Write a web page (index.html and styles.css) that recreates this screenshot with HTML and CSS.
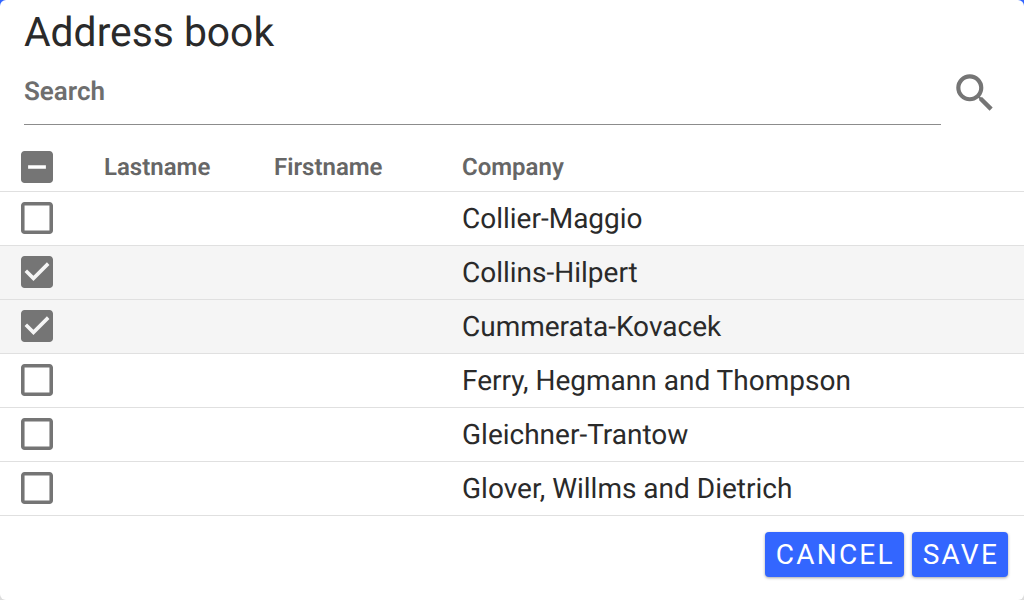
FILE: index.html
```html
<!DOCTYPE html>
<html lang="en">
<head>
<meta charset="utf-8">
<title>Address book</title>
<link rel="stylesheet" href="styles.css">
</head>
<body>
<div class="dialog">
  <h1 class="title">Address book</h1>
  <div class="search-row">
    <div class="search-field"><span class="search-label">Search</span></div>
    <svg class="search-icon" viewBox="0 0 24 24"><path d="M15.5 14h-.79l-.28-.27A6.47 6.47 0 0 0 16 9.5 6.5 6.5 0 1 0 9.5 16c1.61 0 3.09-.59 4.23-1.57l.27.28v.79l5 4.99L20.49 19l-4.99-5zm-6 0C7.01 14 5 11.99 5 9.5S7.01 5 9.5 5 14 7.01 14 9.5 11.99 14 9.5 14z"/></svg>
  </div>
  <div class="table">
    <div class="row head">
      <span class="cell-check"><svg class="box" viewBox="3 3 18 18"><path d="M19 3H5c-1.1 0-2 .9-2 2v14c0 1.1.9 2 2 2h14c1.1 0 2-.9 2-2V5c0-1.1-.9-2-2-2zm-2 10H7v-2h10v2z"/></svg></span>
      <span class="cell-last">Lastname</span>
      <span class="cell-first">Firstname</span>
      <span class="cell-company">Company</span>
    </div>
    <div class="row">
      <span class="cell-check"><svg class="box" viewBox="3 3 18 18"><path d="M19 5v14H5V5h14m0-2H5c-1.1 0-2 .9-2 2v14c0 1.1.9 2 2 2h14c1.1 0 2-.9 2-2V5c0-1.1-.9-2-2-2z"/></svg></span>
      <span class="cell-last"></span><span class="cell-first"></span>
      <span class="cell-company">Collier-Maggio</span>
    </div>
    <div class="row selected">
      <span class="cell-check"><svg class="box" viewBox="3 3 18 18"><path d="M19 3H5c-1.11 0-2 .9-2 2v14c0 1.1.89 2 2 2h14c1.11 0 2-.9 2-2V5c0-1.1-.89-2-2-2zm-9 14l-5-5 1.41-1.41L10 14.17l7.59-7.59L19 8l-9 9z"/></svg></span>
      <span class="cell-last"></span><span class="cell-first"></span>
      <span class="cell-company">Collins-Hilpert</span>
    </div>
    <div class="row selected">
      <span class="cell-check"><svg class="box" viewBox="3 3 18 18"><path d="M19 3H5c-1.11 0-2 .9-2 2v14c0 1.1.89 2 2 2h14c1.11 0 2-.9 2-2V5c0-1.1-.89-2-2-2zm-9 14l-5-5 1.41-1.41L10 14.17l7.59-7.59L19 8l-9 9z"/></svg></span>
      <span class="cell-last"></span><span class="cell-first"></span>
      <span class="cell-company">Cummerata-Kovacek</span>
    </div>
    <div class="row">
      <span class="cell-check"><svg class="box" viewBox="3 3 18 18"><path d="M19 5v14H5V5h14m0-2H5c-1.1 0-2 .9-2 2v14c0 1.1.9 2 2 2h14c1.1 0 2-.9 2-2V5c0-1.1-.9-2-2-2z"/></svg></span>
      <span class="cell-last"></span><span class="cell-first"></span>
      <span class="cell-company">Ferry, Hegmann and Thompson</span>
    </div>
    <div class="row">
      <span class="cell-check"><svg class="box" viewBox="3 3 18 18"><path d="M19 5v14H5V5h14m0-2H5c-1.1 0-2 .9-2 2v14c0 1.1.9 2 2 2h14c1.1 0 2-.9 2-2V5c0-1.1-.9-2-2-2z"/></svg></span>
      <span class="cell-last"></span><span class="cell-first"></span>
      <span class="cell-company">Gleichner-Trantow</span>
    </div>
    <div class="row">
      <span class="cell-check"><svg class="box" viewBox="3 3 18 18"><path d="M19 5v14H5V5h14m0-2H5c-1.1 0-2 .9-2 2v14c0 1.1.9 2 2 2h14c1.1 0 2-.9 2-2V5c0-1.1-.9-2-2-2z"/></svg></span>
      <span class="cell-last"></span><span class="cell-first"></span>
      <span class="cell-company">Glover, Willms and Dietrich</span>
    </div>
  </div>
  <div class="actions">
    <button class="btn">CANCEL</button>
    <button class="btn">SAVE</button>
  </div>
</div>
</body>
</html>
```
FILE: styles.css
```css
* { box-sizing: border-box; }
html, body { margin: 0; height: 100%; }
body {
  background: linear-gradient(#3366ff 0 50%, #dcdcdc 50%);
  font-family: Roboto, "Liberation Sans", sans-serif;
  text-rendering: geometricPrecision;
  overflow: hidden;
}
.dialog {
  width: 1024px;
  height: 600px;
  background: #fff;
  border-radius: 6px;
  display: flex;
  flex-direction: column;
}
.title {
  margin: 0;
  padding: 12px 24px 0;
  font-size: 40.8px;
  font-weight: 400;
  line-height: 40px;
  color: #2a2a2a;
}
.search-row {
  display: flex;
  align-items: flex-start;
  padding: 0 24px;
  margin-top: 16px;
  gap: 9px;
  height: 78px;
}
.search-field {
  flex: 1;
  height: 57px;
  border-bottom: 1px solid #8c8c8c;
  padding-top: 4px;
}
.search-label {
  display: block;
  font-size: 26px;
  font-weight: 600;
  line-height: 40px;
  color: #6e6e6e;
}
.search-icon {
  width: 50px;
  height: 50px;
  fill: #757575;
  flex: none;
}
.table { display: flex; flex-direction: column; }
.row {
  display: flex;
  align-items: center;
  height: 54px;
  border-bottom: 1px solid #e0e0e0;
  font-size: 28px;
  color: #2a2a2a;
}
.row.head {
  height: 46px;
  padding-bottom: 3px;
  font-size: 24px;
  font-weight: 600;
  color: #666;
}
.row.selected { background: #f5f5f5; }
.cell-check { width: 104px; flex: none; padding: 0 0 1px 21px; display: flex; }
.row.head .cell-check { padding-bottom: 0; }
.cell-last { width: 170px; flex: none; }
.cell-first { width: 188px; flex: none; }
.cell-company { flex: 1; }
.box {
  display: block;
  width: 32px;
  height: 32px;
  fill: #757575;
}
.actions {
  display: flex;
  justify-content: flex-end;
  gap: 8px;
  padding: 16px 16px 0;
}
.btn {
  height: 45px;
  padding: 0 9px 0 11px;
  border: 0;
  border-radius: 4px;
  background: #3366ff;
  color: #fff;
  font-family: inherit;
  font-size: 28px;
  font-weight: 400;
  letter-spacing: 2.2px;
  box-shadow: 0 1px 3px rgba(0,0,0,.35);
}
```
